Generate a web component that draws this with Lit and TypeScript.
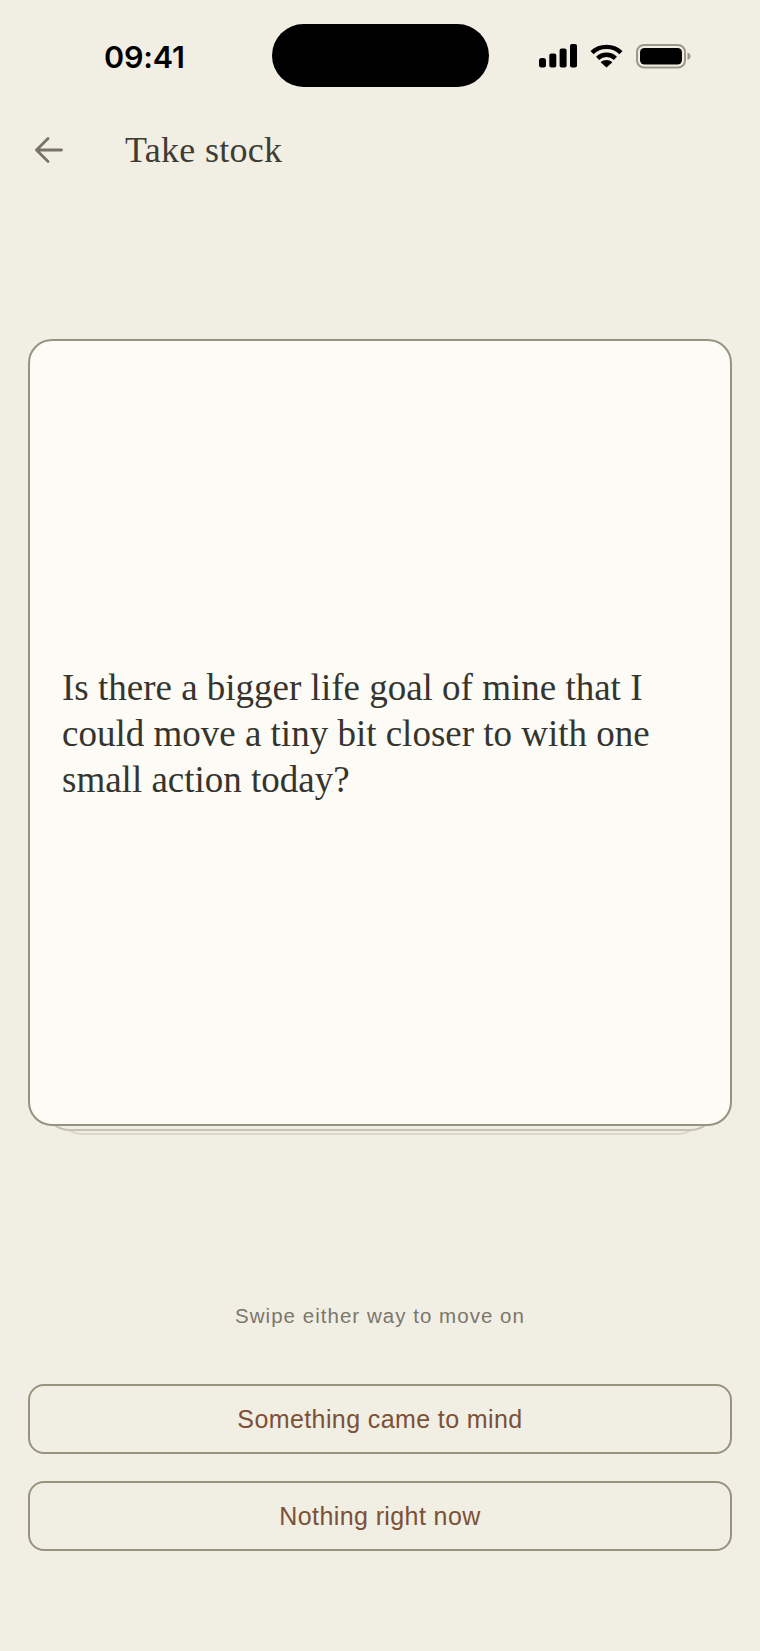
import { LitElement, html, css } from "lit";
import { customElement } from "lit/decorators.js";

@customElement("app-root")
export class AppRoot extends LitElement {
  static styles = css`
    :host { display: block; width: 760px; height: 1651px; background: #f1eee4; overflow: hidden; }
    .page { display: flex; flex-direction: column; padding: 0 28px; box-sizing: border-box; height: 1651px; }
    .status { position: relative; display: flex; align-items: center; height: 63px; margin: 24px -28px 0; padding-left: 272px; }
    .time { position: absolute; left: 104px; top: 15px; font: 600 30.5px/36px Inter, "Liberation Sans", sans-serif; color: #000; letter-spacing: -0.2px; }
    .pill { flex: none; height: 63px; width: 217px; background: #000; border-radius: 32px; }
    .sys { display: flex; align-items: flex-start; margin-left: 50px; padding-top: 2px; }
    .sys svg { display: block; }
    .wifi { margin-left: 13px; }
    .batt { margin-left: 13px; }
    .head { display: flex; align-items: center; height: 40px; margin-top: 43px; }
    .back { width: 28px; height: 26px; margin-left: 7px; color: #77736a; }
    .title { margin-left: 62px; font: 400 36px/40px "Liberation Serif", serif; letter-spacing: 0.3px; color: #3f3c33; }
    .stack { position: relative; margin-top: 169px; height: 787px; }
    .under { position: absolute; box-sizing: border-box; border: 2px solid #d4d1c3; border-radius: 24px; background: #f1eee4; }
    .u2 { left: 30px; right: 30px; top: 100px; bottom: -9px; border-color: #dbd8cb; }
    .u1 { left: 17px; right: 17px; top: 100px; bottom: -5px; border-color: #c6c3b2; }
    .card { position: absolute; inset: 0; box-sizing: border-box; background: #fcfbf5; border: 2px solid #97937f; border-radius: 24px; display: flex; align-items: center; padding: 0 32px; }
    .q { margin: 3px 0 0; font: 400 37px/46.3px "Liberation Serif", serif; color: #35342e; }
    .hint { margin-top: 180px; text-align: center; font: 400 20.5px/20px "Liberation Sans", sans-serif; letter-spacing: 1.03px; color: #7b776b; }
    .actions { display: flex; flex-direction: column; gap: 27px; margin-top: 58px; }
    button { height: 70px; background: transparent; border: 2px solid #97937f; border-radius: 16px; font: 400 25px/28px "Liberation Sans", sans-serif; letter-spacing: 0.4px; color: #7c5136; padding: 0; }
  `;

  render() {
    return html`<div class="page">
      <div class="status">
        <span class="time">09:41</span>
        <div class="pill"></div>
        <div class="sys">
          <svg width="38" height="24" viewBox="0 0 38 24" fill="#000">
            <rect x="0" y="14" width="7" height="9.5" rx="2.5"/>
            <rect x="10.3" y="9.5" width="7" height="14" rx="2"/>
            <rect x="20.6" y="4.5" width="7" height="19" rx="2"/>
            <rect x="31" y="0" width="7" height="23.5" rx="2"/>
          </svg>
          <svg class="wifi" width="33" height="24" viewBox="0 0 33 24" fill="none" stroke="#000" stroke-width="4.4">
            <path d="M2 8.6C10 .9 23 .9 31 8.6"/>
            <path d="M7.6 14.4C12.6 9.6 20.4 9.6 25.4 14.4"/>
            <path d="M16.5 23.5L10.6 18.2C14 15.3 19 15.3 22.4 18.2Z" fill="#000" stroke="none"/>
          </svg>
          <svg class="batt" width="55" height="25" viewBox="0 0 55 25">
            <rect x="1" y="1" width="48" height="22.5" rx="7" fill="none" stroke="#9a978c" stroke-width="2"/>
            <rect x="4" y="4" width="42" height="16.6" rx="4.5" fill="#000"/>
            <path d="M51.5 8.5C53.5 9.2 54.5 10.6 54.5 12.2C54.5 13.8 53.5 15.2 51.5 15.9Z" fill="#9a978c"/>
          </svg>
        </div>
      </div>
      <header class="head">
        <svg class="back" viewBox="0 0 28 26" fill="none" stroke="currentColor" stroke-width="2.8" stroke-linecap="round" stroke-linejoin="round">
          <path d="M26.5 13H2M13 1.5L1.5 13L13 24.5"/>
        </svg>
        <span class="title">Take stock</span>
      </header>
      <section class="stack">
        <div class="under u2"></div>
        <div class="under u1"></div>
        <div class="card">
          <p class="q">Is there a bigger life goal of mine that I could move a tiny bit closer to with one small action today?</p>
        </div>
      </section>
      <div class="hint">Swipe either way to move on</div>
      <div class="actions">
        <button>Something came to mind</button>
        <button>Nothing right now</button>
      </div>
    </div>`;
  }
}
